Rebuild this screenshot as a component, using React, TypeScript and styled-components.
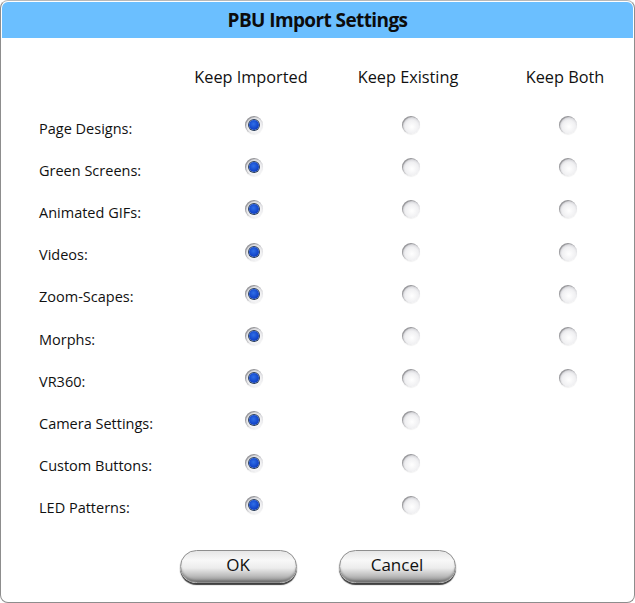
import React from "react";
import styled, { createGlobalStyle } from "styled-components";

const Global = createGlobalStyle`
  html, body {
    margin: 0;
    padding: 0;
    background: #ffffff;
  }
  * {
    box-sizing: border-box;
  }
`;

const Window = styled.div`
  width: 635px;
  height: 603px;
  border: 1px solid #8d8d8d;
  border-top-color: #b8b8b8;
  border-radius: 8px;
  padding: 1px 1px 0;
  background: #ffffff;
  display: flex;
  flex-direction: column;
  font-family: "Open Sans", "Liberation Sans", sans-serif;
  color: #111;
  overflow: hidden;
`;

const TitleBar = styled.div`
  height: 36px;
  background: #6bbfff;
  border-radius: 6px 6px 0 0;
  display: flex;
  align-items: center;
  justify-content: center;
  font-size: 19px;
  font-weight: 700;
  letter-spacing: -0.6px;
  color: #0c0c0c;
`;

const Table = styled.div`
  display: grid;
  grid-template-columns: 118px repeat(3, 120px);
  column-gap: 37px;
  grid-template-rows: 54px;
  grid-auto-rows: 42.2px;
  padding: 12px 0 0 37px;
`;

const HeaderCell = styled.div`
  display: flex;
  align-items: center;
  justify-content: center;
  font-size: 16.3px;
  white-space: nowrap;
  padding-right: 6px;
`;

const Label = styled.div`
  display: flex;
  align-items: center;
  font-size: 14.5px;
  white-space: nowrap;
  padding-top: 6px;
`;

const Cell = styled.div`
  display: flex;
  align-items: center;
  justify-content: center;
`;

const Radio = styled.span<{ $on: boolean }>`
  width: 18px;
  height: 18px;
  border-radius: 50%;
  display: flex;
  align-items: center;
  justify-content: center;
  background: radial-gradient(
    circle at 55% 60%,
    #ffffff 0%,
    #f0f0f2 45%,
    #cfcfd4 72%,
    #8f8f96 100%
  );
  box-shadow: inset 1px 1px 1px rgba(0, 0, 0, 0.3),
    0 1px 1px rgba(0, 0, 0, 0.06);

  &::after {
    content: "";
    display: ${(p) => (p.$on ? "block" : "none")};
    width: 10px;
    height: 10px;
    border-radius: 50%;
    background: radial-gradient(circle at 45% 40%, #2f6fe8 0%, #1345c8 60%, #0a2f93 100%);
    box-shadow: 0 0 0 1px #30445f;
  }
`;

const Footer = styled.div`
  display: flex;
  justify-content: center;
  gap: 42px;
  margin-top: 24px;
`;

const Button = styled.button`
  width: 117px;
  height: 33px;
  border-radius: 17px;
  border: 1px solid #8e8e8e;
  background: linear-gradient(
    to bottom,
    #e6e6e6 0%,
    #f8f8f8 30%,
    #ececec 55%,
    #bdbdbd 80%,
    #8a8a8a 100%
  );
  box-shadow: 0 2px 1px #3f3f3f, inset 0 -2px 2px rgba(0, 0, 0, 0.2);
  font-family: "Open Sans", "Liberation Sans", sans-serif;
  font-size: 17px;
  color: #111;
  padding: 0 0 4px;
  cursor: pointer;
`;

const columns = ["Keep Imported", "Keep Existing", "Keep Both"];

const rows: { label: string; both: boolean }[] = [
  { label: "Page Designs:", both: true },
  { label: "Green Screens:", both: true },
  { label: "Animated GIFs:", both: true },
  { label: "Videos:", both: true },
  { label: "Zoom-Scapes:", both: true },
  { label: "Morphs:", both: true },
  { label: "VR360:", both: true },
  { label: "Camera Settings:", both: false },
  { label: "Custom Buttons:", both: false },
  { label: "LED Patterns:", both: false },
];

const App: React.FC = () => (
  <>
    <Global />
    <Window>
      <TitleBar>PBU Import Settings</TitleBar>
      <Table>
        <div />
        {columns.map((c) => (
          <HeaderCell key={c}>{c}</HeaderCell>
        ))}
        {rows.map((r) => (
          <React.Fragment key={r.label}>
            <Label>{r.label}</Label>
            <Cell>
              <Radio $on />
            </Cell>
            <Cell>
              <Radio $on={false} />
            </Cell>
            <Cell>{r.both && <Radio $on={false} />}</Cell>
          </React.Fragment>
        ))}
      </Table>
      <Footer>
        <Button>OK</Button>
        <Button>Cancel</Button>
      </Footer>
    </Window>
  </>
);

export default App;
